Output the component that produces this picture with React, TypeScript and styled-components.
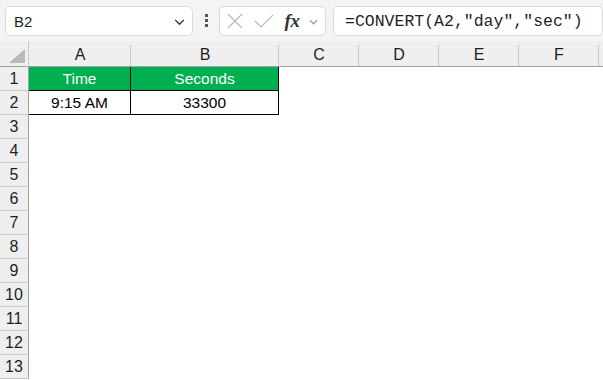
import styled, { createGlobalStyle } from "styled-components";

const GlobalStyle = createGlobalStyle`
  html, body {
    margin: 0;
    padding: 0;
    background: #ffffff;
    overflow: hidden;
  }
  body {
    font-family: "Liberation Sans", Arial, sans-serif;
  }
`;

const Page = styled.div`
  width: 603px;
  height: 380px;
  display: flex;
  flex-direction: column;
  overflow: hidden;
`;

const Toolbar = styled.div`
  height: 41px;
  flex: none;
  display: flex;
  align-items: center;
  gap: 7px;
  padding: 0 0 0 5px;
  background: #f4f4f4;
  box-sizing: border-box;
`;

const Box = styled.div<{ $w?: number; $grow?: boolean }>`
  height: 30px;
  box-sizing: border-box;
  width: ${(p) => (p.$w ? `${p.$w}px` : "auto")};
  flex: ${(p) => (p.$grow ? "1 0 auto" : "none")};
  background: #ffffff;
  border: 1px solid #dadada;
  border-radius: 5px;
  display: flex;
  align-items: center;
  margin-top: 1px;
`;

const NameText = styled.span`
  flex: 1;
  padding-left: 8px;
  font-size: 15px;
  color: #1f1f1f;
`;

const FormulaText = styled.span`
  padding-left: 11px;
  font-family: "Liberation Mono", "DejaVu Sans Mono", monospace;
  font-size: 16.5px;
  color: #1f1f1f;
  white-space: pre;
`;

const Dots = styled.div`
  width: 12px;
  display: flex;
  flex-direction: column;
  align-items: center;
  gap: 2px;
  span {
    width: 3px;
    height: 3px;
    background: #555;
  }
`;

const IconSlot = styled.span<{ $w: number }>`
  width: ${(p) => p.$w}px;
  display: flex;
  align-items: center;
  justify-content: center;
`;

const Fx = styled.span`
  font-family: "Liberation Serif", "Times New Roman", serif;
  font-style: italic;
  font-weight: bold;
  font-size: 19px;
  color: #333;
  letter-spacing: -0.5px;
`;

const Sheet = styled.div`
  flex: 1;
  display: flex;
  flex-direction: column;
  font-family: "Liberation Sans", Arial, sans-serif;
`;

const Row = styled.div<{ $h: number }>`
  display: flex;
  height: ${(p) => p.$h}px;
  flex: none;
`;

const Corner = styled.div`
  width: 29px;
  flex: none;
  box-sizing: border-box;
  background: #efefef;
  border-right: 1px solid #c9c9c9;
  border-bottom: 1px solid #a0a0a0;
  display: flex;
  align-items: flex-end;
  justify-content: flex-end;
  padding: 0 3px 3px 0;
`;

const ColHead = styled.div<{ $w: number }>`
  width: ${(p) => p.$w}px;
  flex: none;
  box-sizing: border-box;
  background: #efefef;
  border-bottom: 1px solid #a0a0a0;
  position: relative;
  display: flex;
  align-items: center;
  justify-content: center;
  padding-top: 3px;
  font-size: 16px;
  color: #1f1f1f;
  &::after {
    content: "";
    position: absolute;
    right: 0;
    top: 4px;
    bottom: 0;
    width: 1px;
    background: #c9c9c9;
  }
`;

const RowHead = styled.div`
  width: 29px;
  flex: none;
  box-sizing: border-box;
  background: #efefef;
  border-right: 1px solid #a0a0a0;
  border-bottom: 1px solid #c9c9c9;
  display: flex;
  align-items: center;
  justify-content: center;
  font-size: 16px;
  color: #1f1f1f;
`;

const Cell = styled.div<{ $w: number; $head?: boolean; $data?: boolean }>`
  width: ${(p) => p.$w}px;
  flex: none;
  box-sizing: border-box;
  background: ${(p) => (p.$head ? "#00b050" : "#ffffff")};
  color: ${(p) => (p.$head ? "#ffffff" : "#000000")};
  border-right: 1px solid ${(p) => (p.$data ? "#000000" : "transparent")};
  border-bottom: 1px solid ${(p) => (p.$data ? "#000000" : "transparent")};
  display: flex;
  align-items: center;
  justify-content: center;
  font-size: 15.5px;
  padding-top: 1px;
`;

const cols = [
  { name: "A", w: 102 },
  { name: "B", w: 148 },
  { name: "C", w: 80 },
  { name: "D", w: 80 },
  { name: "E", w: 80 },
  { name: "F", w: 80 },
  { name: "", w: 80 },
];

const data: Record<number, string[]> = {
  1: ["Time", "Seconds"],
  2: ["9:15 AM", "33300"],
};

function Chevron({ size = 12, color = "#444" }: { size?: number; color?: string }) {
  return (
    <svg width={size} height={size} viewBox="0 0 12 12" fill="none">
      <path d="M2 4.5 L6 8.5 L10 4.5" stroke={color} strokeWidth="1.3" />
    </svg>
  );
}

export default function App() {
  const rows = Array.from({ length: 13 }, (_, i) => i + 1);
  return (
    <Page>
      <GlobalStyle />
      <Toolbar>
        <Box $w={188}>
          <NameText>B2</NameText>
          <IconSlot $w={26}>
            <Chevron size={13} color="#333" />
          </IconSlot>
        </Box>
        <Dots>
          <span />
          <span />
          <span />
        </Dots>
        <Box $w={107}>
          <IconSlot $w={30}>
            <svg width="16" height="16" viewBox="0 0 16 16">
              <path d="M1 1 L15 15 M15 1 L1 15" stroke="#b9b9b9" strokeWidth="1.2" />
            </svg>
          </IconSlot>
          <IconSlot $w={28}>
            <svg width="20" height="16" viewBox="0 0 20 16">
              <path d="M1 8 L7 14 L19 2" stroke="#b9b9b9" strokeWidth="1.2" fill="none" />
            </svg>
          </IconSlot>
          <IconSlot $w={28}>
            <Fx>fx</Fx>
          </IconSlot>
          <IconSlot $w={14}>
            <Chevron size={11} color="#999" />
          </IconSlot>
        </Box>
        <Box $grow>
          <FormulaText>=CONVERT(A2,"day","sec")</FormulaText>
        </Box>
      </Toolbar>
      <Sheet>
        <Row $h={26}>
          <Corner>
            <svg width="16" height="14" viewBox="0 0 16 14">
              <path d="M16 0 L16 14 L0 14 Z" fill="#b9b9b9" />
            </svg>
          </Corner>
          {cols.map((c, i) => (
            <ColHead key={i} $w={c.w}>
              {c.name}
            </ColHead>
          ))}
        </Row>
        {rows.map((r) => (
          <Row key={r} $h={24}>
            <RowHead>{r}</RowHead>
            {cols.map((c, ci) => {
              const values = data[r];
              const has = !!values && ci < values.length;
              return (
                <Cell key={ci} $w={c.w} $head={r === 1 && has} $data={has}>
                  {has ? values[ci] : ""}
                </Cell>
              );
            })}
          </Row>
        ))}
      </Sheet>
    </Page>
  );
}
